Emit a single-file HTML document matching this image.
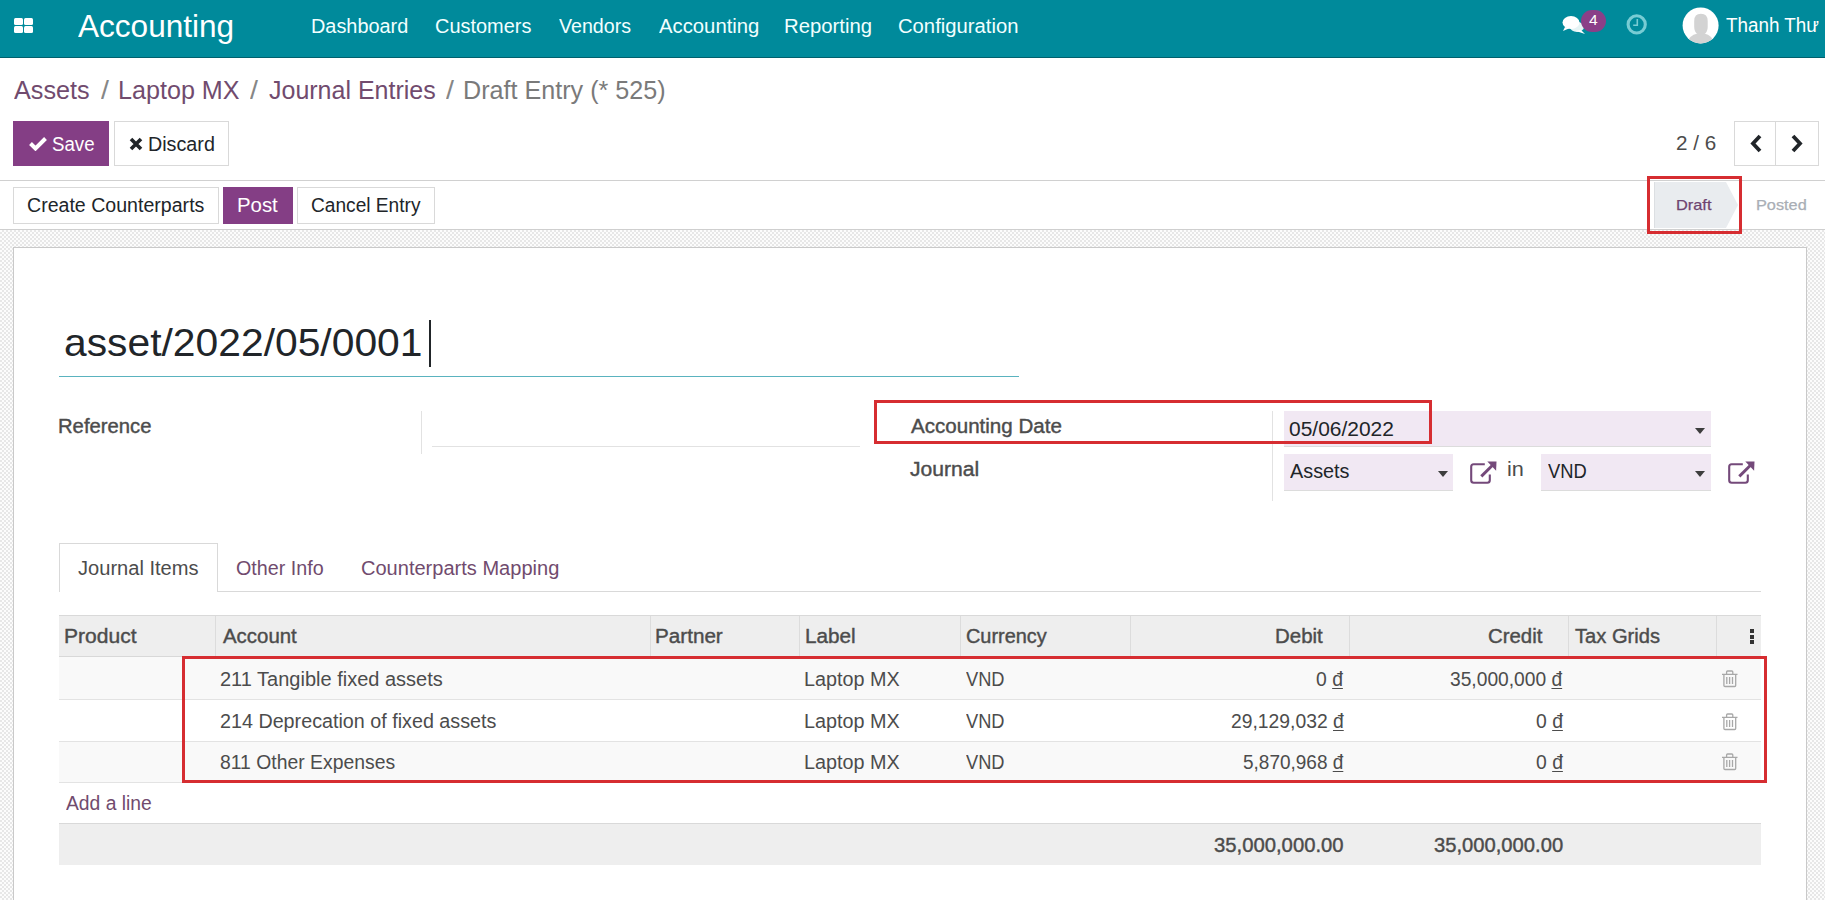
<!DOCTYPE html>
<html><head><meta charset="utf-8"><title>Draft Entry</title>
<style>
html,body{margin:0;padding:0;}
body{width:1825px;height:900px;overflow:hidden;position:relative;background:#fff;font-family:"Liberation Sans",sans-serif;}
</style></head><body>
<div style="position:absolute;left:0px;top:0px;width:1825px;height:58px;background:#008a9b;"></div>
<div style="position:absolute;left:0px;top:57px;width:1825px;height:1px;background:#00606d;"></div>
<div style="position:absolute;left:14px;top:18px;width:8.5px;height:7px;background:#fff;border-radius:1.5px;"></div>
<div style="position:absolute;left:24px;top:18px;width:8.5px;height:7px;background:#fff;border-radius:1.5px;"></div>
<div style="position:absolute;left:14px;top:26px;width:8.5px;height:7px;background:#fff;border-radius:1.5px;"></div>
<div style="position:absolute;left:24px;top:26px;width:8.5px;height:7px;background:#fff;border-radius:1.5px;"></div>
<div style="position:absolute;left:78.00px;top:26.00px;font-size:32px;line-height:0;white-space:nowrap;color:#fff;transform:scaleX(0.9862);transform-origin:0 0;">Accounting</div>
<div style="position:absolute;left:311.11px;top:25.90px;font-size:20px;line-height:0;white-space:nowrap;color:#f2ffff;transform:scaleX(0.9937);transform-origin:0 0;">Dashboard</div>
<div style="position:absolute;left:434.60px;top:25.90px;font-size:20px;line-height:0;white-space:nowrap;color:#f2ffff;transform:scaleX(0.9968);transform-origin:0 0;">Customers</div>
<div style="position:absolute;left:559.20px;top:25.90px;font-size:20px;line-height:0;white-space:nowrap;color:#f2ffff;transform:scaleX(0.9821);transform-origin:0 0;">Vendors</div>
<div style="position:absolute;left:659.00px;top:25.90px;font-size:20px;line-height:0;white-space:nowrap;color:#f2ffff;transform:scaleX(1.0143);transform-origin:0 0;">Accounting</div>
<div style="position:absolute;left:784.38px;top:25.90px;font-size:20px;line-height:0;white-space:nowrap;color:#f2ffff;transform:scaleX(1.0143);transform-origin:0 0;">Reporting</div>
<div style="position:absolute;left:897.99px;top:25.90px;font-size:20px;line-height:0;white-space:nowrap;color:#f2ffff;transform:scaleX(1.0120);transform-origin:0 0;">Configuration</div>
<svg style="position:absolute;left:1561px;top:14px" width="26" height="22" viewBox="0 0 26 22"><ellipse cx="10" cy="8.5" rx="8.5" ry="6.5" fill="#fff"/><path d="M4 13 L2 17 L9 14 Z" fill="#fff"/><ellipse cx="16" cy="13" rx="7" ry="5" fill="#fff" opacity="0.9"/><path d="M20 16 L24 20 L15 17 Z" fill="#fff"/></svg>
<div style="position:absolute;left:1581px;top:10px;width:25px;height:22px;background:#8a3f88;border-radius:11px;"></div>
<div style="position:absolute;left:1588.69px;top:20.00px;font-size:14px;line-height:0;white-space:nowrap;color:#fff;transform:scaleX(1.1204);transform-origin:0 0;">4</div>
<svg style="position:absolute;left:1620px;top:6px" width="35" height="35" viewBox="0 0 35 35"><circle cx="16.7" cy="18.4" r="8.6" fill="none" stroke="#78ccd4" stroke-width="3.1"/><path d="M17.3 13 V19.2 H13.2" fill="none" stroke="#78ccd4" stroke-width="1.6"/></svg>
<svg style="position:absolute;left:1682px;top:7px" width="37" height="37" viewBox="0 0 37 37"><defs><clipPath id="av"><circle cx="18.6" cy="18.4" r="18"/></clipPath></defs><circle cx="18.6" cy="18.4" r="18" fill="#fff"/><g clip-path="url(#av)" fill="#d3d3d3"><path d="M12.2 14 Q12.2 6.8 18.9 6.8 Q25.7 6.8 25.7 14 V20 Q25.7 25 22.2 27.2 H15.7 Q12.2 25 12.2 20 Z"/><path d="M4 40 Q5.5 28.6 15.5 26.6 H22.3 Q31.8 28.6 33 40 Z"/></g></svg>
<div style="position:absolute;left:1725.92px;top:25.40px;font-size:20px;line-height:0;white-space:nowrap;color:#fff;transform:scaleX(0.9426);transform-origin:0 0;">Thanh Thư</div>
<div style="position:absolute;left:14.00px;top:90.00px;font-size:26px;line-height:0;white-space:nowrap;color:#714b6e;transform:scaleX(0.9690);transform-origin:0 0;">Assets</div>
<div style="position:absolute;left:101.00px;top:90.00px;font-size:26px;line-height:0;white-space:nowrap;color:#868686;transform:scaleX(1.0989);transform-origin:0 0;">/</div>
<div style="position:absolute;left:117.99px;top:90.00px;font-size:26px;line-height:0;white-space:nowrap;color:#714b6e;transform:scaleX(0.9666);transform-origin:0 0;">Laptop MX</div>
<div style="position:absolute;left:249.60px;top:90.00px;font-size:26px;line-height:0;white-space:nowrap;color:#868686;transform:scaleX(1.0989);transform-origin:0 0;">/</div>
<div style="position:absolute;left:269.03px;top:90.00px;font-size:26px;line-height:0;white-space:nowrap;color:#714b6e;transform:scaleX(0.9610);transform-origin:0 0;">Journal Entries</div>
<div style="position:absolute;left:446.00px;top:90.00px;font-size:26px;line-height:0;white-space:nowrap;color:#868686;transform:scaleX(1.0989);transform-origin:0 0;">/</div>
<div style="position:absolute;left:463.39px;top:90.00px;font-size:26px;line-height:0;white-space:nowrap;color:#7a7a7a;transform:scaleX(0.9670);transform-origin:0 0;">Draft Entry (* 525)</div>
<div style="position:absolute;left:13px;top:121px;width:96px;height:45px;background:#843e85;"></div>
<svg style="position:absolute;left:29px;top:136px" width="18" height="15" viewBox="0 0 18 15"><path d="M1.5 7.5 L6.5 12.5 L16.5 2.5" fill="none" stroke="#fff" stroke-width="4"/></svg>
<div style="position:absolute;left:52.16px;top:144.00px;font-size:20px;line-height:0;white-space:nowrap;color:#fff;transform:scaleX(0.9339);transform-origin:0 0;">Save</div>
<div style="position:absolute;left:114px;top:121px;width:115px;height:45px;background:#fff;border:1px solid #d9d9d9;box-sizing:border-box;"></div>
<svg style="position:absolute;left:129px;top:137px" width="14" height="14" viewBox="0 0 14 14"><path d="M2 2 L12 12 M12 2 L2 12" stroke="#212529" stroke-width="3.6"/></svg>
<div style="position:absolute;left:148.42px;top:144.00px;font-size:20px;line-height:0;white-space:nowrap;color:#212529;transform:scaleX(0.9861);transform-origin:0 0;">Discard</div>
<div style="position:absolute;left:1675.77px;top:142.70px;font-size:20px;line-height:0;white-space:nowrap;color:#4c4c4c;transform:scaleX(1.0323);transform-origin:0 0;">2 / 6</div>
<div style="position:absolute;left:1734px;top:121px;width:85px;height:45px;background:#fff;border:1px solid #d9d9d9;box-sizing:border-box;"></div>
<div style="position:absolute;left:1775px;top:121px;width:1px;height:45px;background:#d9d9d9;"></div>
<svg style="position:absolute;left:1749px;top:134px" width="14" height="19" viewBox="0 0 14 19"><path d="M11 2 L4 9.5 L11 17" fill="none" stroke="#212529" stroke-width="3.8"/></svg>
<svg style="position:absolute;left:1790px;top:134px" width="14" height="19" viewBox="0 0 14 19"><path d="M3 2 L10 9.5 L3 17" fill="none" stroke="#212529" stroke-width="3.8"/></svg>
<div style="position:absolute;left:0px;top:180px;width:1825px;height:1px;background:#d0d0d0;"></div>
<div style="position:absolute;left:13px;top:187px;width:206px;height:37px;background:#fff;border:1px solid #d9d9d9;box-sizing:border-box;"></div>
<div style="position:absolute;left:27.42px;top:205.00px;font-size:20px;line-height:0;white-space:nowrap;color:#212529;transform:scaleX(0.9788);transform-origin:0 0;">Create Counterparts</div>
<div style="position:absolute;left:223px;top:187px;width:70px;height:37px;background:#843e85;"></div>
<div style="position:absolute;left:236.77px;top:205.00px;font-size:20px;line-height:0;white-space:nowrap;color:#fff;transform:scaleX(1.0183);transform-origin:0 0;">Post</div>
<div style="position:absolute;left:297px;top:187px;width:138px;height:37px;background:#fff;border:1px solid #d9d9d9;box-sizing:border-box;"></div>
<div style="position:absolute;left:310.94px;top:205.00px;font-size:20px;line-height:0;white-space:nowrap;color:#212529;transform:scaleX(0.9559);transform-origin:0 0;">Cancel Entry</div>
<svg style="position:absolute;left:1654px;top:182px" width="85" height="46" viewBox="0 0 85 46"><path d="M0 0 H72 L84 23 L72 46 H0 Z" fill="#e9ecef"/><path d="M0.5 0 V46" stroke="#dcdfe2" stroke-width="1"/></svg>
<div style="position:absolute;left:1675.69px;top:205.10px;font-size:15px;line-height:0;white-space:nowrap;color:#6f4470;transform:scaleX(1.0897);transform-origin:0 0;-webkit-text-stroke:0.25px currentColor;">Draft</div>
<div style="position:absolute;left:1756.40px;top:205.10px;font-size:15px;line-height:0;white-space:nowrap;color:#a9aeb5;transform:scaleX(1.0860);transform-origin:0 0;-webkit-text-stroke:0.25px currentColor;">Posted</div>
<div style="position:absolute;left:0px;top:229px;width:1825px;height:1px;background:#cfcfcf;"></div>
<div style="position:absolute;left:0px;top:230px;width:1825px;height:670px;background-color:#f2f2f2;background-image:repeating-conic-gradient(#e7e7e7 0% 25%, #fcfcfc 0% 50%);background-size:4px 4px;"></div>
<div style="position:absolute;left:13px;top:247px;width:1794px;height:700px;background:#fff;border:1px solid #c9c9c9;box-sizing:border-box;"></div>
<div style="position:absolute;left:64.17px;top:342.90px;font-size:39px;line-height:0;white-space:nowrap;color:#212529;transform:scaleX(1.0463);transform-origin:0 0;">asset/2022/05/0001</div>
<div style="position:absolute;left:429px;top:320px;width:2px;height:47px;background:#212529;"></div>
<div style="position:absolute;left:59px;top:376px;width:960px;height:1px;background:#5ab3bf;"></div>
<div style="position:absolute;left:57.98px;top:426.00px;font-size:20px;line-height:0;white-space:nowrap;color:#4c4c4c;transform:scaleX(1.0122);transform-origin:0 0;-webkit-text-stroke:0.4px currentColor;">Reference</div>
<div style="position:absolute;left:421px;top:411px;width:1px;height:43px;background:#e2e2e2;"></div>
<div style="position:absolute;left:432px;top:446px;width:428px;height:1px;background:#e2e2e2;"></div>
<div style="position:absolute;left:910.60px;top:426.40px;font-size:20px;line-height:0;white-space:nowrap;color:#4c4c4c;transform:scaleX(1.0281);transform-origin:0 0;-webkit-text-stroke:0.4px currentColor;">Accounting Date</div>
<div style="position:absolute;left:910.28px;top:468.70px;font-size:20px;line-height:0;white-space:nowrap;color:#4c4c4c;transform:scaleX(1.0547);transform-origin:0 0;-webkit-text-stroke:0.4px currentColor;">Journal</div>
<div style="position:absolute;left:1272px;top:411px;width:1px;height:90px;background:#e2e2e2;"></div>
<div style="position:absolute;left:1284px;top:411px;width:427px;height:35px;background:#f1e8f3;border-bottom:1px solid #dcdcdc;"></div>
<div style="position:absolute;left:1289.36px;top:428.90px;font-size:20px;line-height:0;white-space:nowrap;color:#212529;transform:scaleX(1.0478);transform-origin:0 0;">05/06/2022</div>
<svg style="position:absolute;left:1694.5px;top:427.5px" width="11" height="6" viewBox="0 0 11 6"><path d="M0 0 H10 L5 6 Z" fill="#3d3d3d"/></svg>
<div style="position:absolute;left:1284px;top:454px;width:169px;height:36px;background:#f1e8f3;border-bottom:1px solid #dcdcdc;"></div>
<div style="position:absolute;left:1290.20px;top:471.30px;font-size:20px;line-height:0;white-space:nowrap;color:#212529;transform:scaleX(0.9916);transform-origin:0 0;">Assets</div>
<svg style="position:absolute;left:1437.5px;top:470.5px" width="11" height="6" viewBox="0 0 11 6"><path d="M0 0 H10 L5 6 Z" fill="#3d3d3d"/></svg>
<svg style="position:absolute;left:1464px;top:455px" width="40" height="35" viewBox="0 0 40 35"><path d="M20.8 9.2 H9.7 Q7.2 9.2 7.2 11.7 V25.3 Q7.2 27.8 9.7 27.8 H23.3 Q25.8 27.8 25.8 25.3 V19.6" fill="none" stroke="#74497a" stroke-width="2.1"/><path d="M17.3 21.4 L28.5 10.2" stroke="#74497a" stroke-width="2.9"/><path d="M23.3 6.4 L32.5 6.5 L32.1 15.8 Z" fill="#74497a"/></svg>
<div style="position:absolute;left:1507.19px;top:468.50px;font-size:20px;line-height:0;white-space:nowrap;color:#4c4c4c;transform:scaleX(1.0853);transform-origin:0 0;">in</div>
<div style="position:absolute;left:1541px;top:454px;width:170px;height:36px;background:#f1e8f3;border-bottom:1px solid #dcdcdc;"></div>
<div style="position:absolute;left:1547.71px;top:471.30px;font-size:20px;line-height:0;white-space:nowrap;color:#212529;transform:scaleX(0.9175);transform-origin:0 0;">VND</div>
<svg style="position:absolute;left:1694.5px;top:470.5px" width="11" height="6" viewBox="0 0 11 6"><path d="M0 0 H10 L5 6 Z" fill="#3d3d3d"/></svg>
<svg style="position:absolute;left:1721.5px;top:455px" width="40" height="35" viewBox="0 0 40 35"><path d="M20.8 9.2 H9.7 Q7.2 9.2 7.2 11.7 V25.3 Q7.2 27.8 9.7 27.8 H23.3 Q25.8 27.8 25.8 25.3 V19.6" fill="none" stroke="#74497a" stroke-width="2.1"/><path d="M17.3 21.4 L28.5 10.2" stroke="#74497a" stroke-width="2.9"/><path d="M23.3 6.4 L32.5 6.5 L32.1 15.8 Z" fill="#74497a"/></svg>
<div style="position:absolute;left:217px;top:591px;width:1544px;height:1px;background:#d9d9d9;"></div>
<div style="position:absolute;left:59px;top:543px;width:159px;height:49px;background:#fff;border:1px solid #d9d9d9;border-bottom:none;box-sizing:border-box;"></div>
<div style="position:absolute;left:78.10px;top:568.40px;font-size:20px;line-height:0;white-space:nowrap;color:#4c4c4c;transform:scaleX(1.0042);transform-origin:0 0;">Journal Items</div>
<div style="position:absolute;left:236.11px;top:568.40px;font-size:20px;line-height:0;white-space:nowrap;color:#714b6e;transform:scaleX(0.9851);transform-origin:0 0;">Other Info</div>
<div style="position:absolute;left:360.60px;top:568.40px;font-size:20px;line-height:0;white-space:nowrap;color:#714b6e;transform:scaleX(1.0020);transform-origin:0 0;">Counterparts Mapping</div>
<div style="position:absolute;left:59px;top:615px;width:1702px;height:41px;background:#eeeeee;border-top:1px solid #d9d9d9;box-sizing:border-box;"></div>
<div style="position:absolute;left:59px;top:656px;width:1702px;height:2px;background:#d8d8d8;"></div>
<div style="position:absolute;left:215px;top:616px;width:1px;height:40px;background:#dcdcdc;"></div>
<div style="position:absolute;left:650px;top:616px;width:1px;height:40px;background:#dcdcdc;"></div>
<div style="position:absolute;left:799px;top:616px;width:1px;height:40px;background:#dcdcdc;"></div>
<div style="position:absolute;left:960px;top:616px;width:1px;height:40px;background:#dcdcdc;"></div>
<div style="position:absolute;left:1130px;top:616px;width:1px;height:40px;background:#dcdcdc;"></div>
<div style="position:absolute;left:1349px;top:616px;width:1px;height:40px;background:#dcdcdc;"></div>
<div style="position:absolute;left:1568px;top:616px;width:1px;height:40px;background:#dcdcdc;"></div>
<div style="position:absolute;left:1716px;top:616px;width:1px;height:40px;background:#dcdcdc;"></div>
<div style="position:absolute;left:64.32px;top:636.00px;font-size:20px;line-height:0;white-space:nowrap;color:#4c4c4c;transform:scaleX(1.0521);transform-origin:0 0;-webkit-text-stroke:0.4px currentColor;">Product</div>
<div style="position:absolute;left:222.60px;top:636.00px;font-size:20px;line-height:0;white-space:nowrap;color:#4c4c4c;transform:scaleX(1.0208);transform-origin:0 0;-webkit-text-stroke:0.4px currentColor;">Account</div>
<div style="position:absolute;left:655.35px;top:636.00px;font-size:20px;line-height:0;white-space:nowrap;color:#4c4c4c;transform:scaleX(1.0330);transform-origin:0 0;-webkit-text-stroke:0.4px currentColor;">Partner</div>
<div style="position:absolute;left:804.94px;top:636.00px;font-size:20px;line-height:0;white-space:nowrap;color:#4c4c4c;transform:scaleX(1.0348);transform-origin:0 0;-webkit-text-stroke:0.4px currentColor;">Label</div>
<div style="position:absolute;left:965.60px;top:636.00px;font-size:20px;line-height:0;white-space:nowrap;color:#4c4c4c;transform:scaleX(0.9950);transform-origin:0 0;-webkit-text-stroke:0.4px currentColor;">Currency</div>
<div style="position:absolute;left:1575.40px;top:636.00px;font-size:20px;line-height:0;white-space:nowrap;color:#4c4c4c;transform:scaleX(1.0060);transform-origin:0 0;-webkit-text-stroke:0.4px currentColor;">Tax Grids</div>
<div style="position:absolute;left:1275.06px;top:636.00px;font-size:20px;line-height:0;white-space:nowrap;color:#4c4c4c;transform:scaleX(1.0223);transform-origin:0 0;-webkit-text-stroke:0.4px currentColor;">Debit</div>
<div style="position:absolute;left:1487.98px;top:636.00px;font-size:20px;line-height:0;white-space:nowrap;color:#4c4c4c;transform:scaleX(1.0192);transform-origin:0 0;-webkit-text-stroke:0.4px currentColor;">Credit</div>
<div style="position:absolute;left:1749.5px;top:629px;width:4px;height:4px;background:#333;"></div>
<div style="position:absolute;left:1749.5px;top:634.5px;width:4px;height:4px;background:#333;"></div>
<div style="position:absolute;left:1749.5px;top:640px;width:4px;height:4px;background:#333;"></div>
<div style="position:absolute;left:59px;top:657px;width:1702px;height:42px;background:#f9f9f9;"></div>
<div style="position:absolute;left:59px;top:699px;width:1702px;height:1px;background:#e3e3e3;"></div>
<div style="position:absolute;left:59px;top:700px;width:1702px;height:41px;background:#ffffff;"></div>
<div style="position:absolute;left:59px;top:741px;width:1702px;height:1px;background:#e3e3e3;"></div>
<div style="position:absolute;left:59px;top:742px;width:1702px;height:40px;background:#f9f9f9;"></div>
<div style="position:absolute;left:59px;top:782px;width:1702px;height:1px;background:#e3e3e3;"></div>
<div style="position:absolute;left:220.00px;top:679.20px;font-size:20px;line-height:0;white-space:nowrap;color:#4c4c4c;">211 Tangible fixed assets</div>
<div style="position:absolute;left:803.62px;top:679.20px;font-size:20px;line-height:0;white-space:nowrap;color:#4c4c4c;transform:scaleX(0.9894);transform-origin:0 0;">Laptop MX</div>
<div style="position:absolute;left:965.91px;top:679.20px;font-size:20px;line-height:0;white-space:nowrap;color:#4c4c4c;transform:scaleX(0.9126);transform-origin:0 0;">VND</div>
<div style="position:absolute;left:1316.43px;top:679.20px;font-size:20px;line-height:0;white-space:nowrap;color:#4c4c4c;transform:scaleX(0.9667);transform-origin:0 0;">0 <span style="text-decoration:underline;text-underline-offset:2px;text-decoration-thickness:1px">đ</span></div>
<div style="position:absolute;left:1450.23px;top:679.20px;font-size:20px;line-height:0;white-space:nowrap;color:#4c4c4c;transform:scaleX(0.9603);transform-origin:0 0;">35,000,000 <span style="text-decoration:underline;text-underline-offset:2px;text-decoration-thickness:1px">đ</span></div>
<svg style="position:absolute;left:1716px;top:664.0px" width="28" height="28" viewBox="0 0 28 28"><path d="M10.6 10.3 V8 Q10.6 7 11.6 7 H15.8 Q16.8 7 16.8 8 V10.3 M6 10.4 H21.5 M7.9 10.8 V21.4 Q7.9 22.5 9 22.5 H18.6 Q19.7 22.5 19.7 21.4 V10.8 M10.8 13 V20 M13.6 13 V20 M16.5 13 V20" fill="none" stroke="#a8a8a8" stroke-width="1.3"/></svg>
<div style="position:absolute;left:220.01px;top:720.50px;font-size:20px;line-height:0;white-space:nowrap;color:#4c4c4c;transform:scaleX(0.9864);transform-origin:0 0;">214 Deprecation of fixed assets</div>
<div style="position:absolute;left:803.62px;top:720.50px;font-size:20px;line-height:0;white-space:nowrap;color:#4c4c4c;transform:scaleX(0.9894);transform-origin:0 0;">Laptop MX</div>
<div style="position:absolute;left:965.91px;top:720.50px;font-size:20px;line-height:0;white-space:nowrap;color:#4c4c4c;transform:scaleX(0.9126);transform-origin:0 0;">VND</div>
<div style="position:absolute;left:1230.53px;top:720.50px;font-size:20px;line-height:0;white-space:nowrap;color:#4c4c4c;transform:scaleX(0.9655);transform-origin:0 0;">29,129,032 <span style="text-decoration:underline;text-underline-offset:2px;text-decoration-thickness:1px">đ</span></div>
<div style="position:absolute;left:1535.53px;top:720.50px;font-size:20px;line-height:0;white-space:nowrap;color:#4c4c4c;transform:scaleX(0.9667);transform-origin:0 0;">0 <span style="text-decoration:underline;text-underline-offset:2px;text-decoration-thickness:1px">đ</span></div>
<svg style="position:absolute;left:1716px;top:706.5px" width="28" height="28" viewBox="0 0 28 28"><path d="M10.6 10.3 V8 Q10.6 7 11.6 7 H15.8 Q16.8 7 16.8 8 V10.3 M6 10.4 H21.5 M7.9 10.8 V21.4 Q7.9 22.5 9 22.5 H18.6 Q19.7 22.5 19.7 21.4 V10.8 M10.8 13 V20 M13.6 13 V20 M16.5 13 V20" fill="none" stroke="#a8a8a8" stroke-width="1.3"/></svg>
<div style="position:absolute;left:220.13px;top:761.90px;font-size:20px;line-height:0;white-space:nowrap;color:#4c4c4c;transform:scaleX(0.9682);transform-origin:0 0;">811 Other Expenses</div>
<div style="position:absolute;left:803.62px;top:761.90px;font-size:20px;line-height:0;white-space:nowrap;color:#4c4c4c;transform:scaleX(0.9894);transform-origin:0 0;">Laptop MX</div>
<div style="position:absolute;left:965.91px;top:761.90px;font-size:20px;line-height:0;white-space:nowrap;color:#4c4c4c;transform:scaleX(0.9126);transform-origin:0 0;">VND</div>
<div style="position:absolute;left:1243.04px;top:761.90px;font-size:20px;line-height:0;white-space:nowrap;color:#4c4c4c;transform:scaleX(0.9494);transform-origin:0 0;">5,870,968 <span style="text-decoration:underline;text-underline-offset:2px;text-decoration-thickness:1px">đ</span></div>
<div style="position:absolute;left:1535.53px;top:761.90px;font-size:20px;line-height:0;white-space:nowrap;color:#4c4c4c;transform:scaleX(0.9667);transform-origin:0 0;">0 <span style="text-decoration:underline;text-underline-offset:2px;text-decoration-thickness:1px">đ</span></div>
<svg style="position:absolute;left:1716px;top:747.2px" width="28" height="28" viewBox="0 0 28 28"><path d="M10.6 10.3 V8 Q10.6 7 11.6 7 H15.8 Q16.8 7 16.8 8 V10.3 M6 10.4 H21.5 M7.9 10.8 V21.4 Q7.9 22.5 9 22.5 H18.6 Q19.7 22.5 19.7 21.4 V10.8 M10.8 13 V20 M13.6 13 V20 M16.5 13 V20" fill="none" stroke="#a8a8a8" stroke-width="1.3"/></svg>
<div style="position:absolute;left:65.50px;top:803.00px;font-size:20px;line-height:0;white-space:nowrap;color:#714b6e;transform:scaleX(0.9637);transform-origin:0 0;">Add a line</div>
<div style="position:absolute;left:59px;top:823px;width:1702px;height:42px;background:#eeeeee;border-top:1px solid #d9d9d9;box-sizing:border-box;"></div>
<div style="position:absolute;left:1214.39px;top:845.00px;font-size:20px;line-height:0;white-space:nowrap;color:#4c4c4c;transform:scaleX(1.0134);transform-origin:0 0;-webkit-text-stroke:0.4px currentColor;">35,000,000.00</div>
<div style="position:absolute;left:1433.99px;top:845.00px;font-size:20px;line-height:0;white-space:nowrap;color:#4c4c4c;transform:scaleX(1.0095);transform-origin:0 0;-webkit-text-stroke:0.4px currentColor;">35,000,000.00</div>
<div style="position:absolute;left:1646.5px;top:176px;width:95.5px;height:57.5px;border:3.9px solid #d62d31;box-sizing:border-box;"></div>
<div style="position:absolute;left:874px;top:400px;width:558px;height:44px;border:3.9px solid #d62d31;box-sizing:border-box;"></div>
<div style="position:absolute;left:182px;top:656.4px;width:1585px;height:126.80000000000007px;border:3.9px solid #d62d31;box-sizing:border-box;"></div>
</body></html>
